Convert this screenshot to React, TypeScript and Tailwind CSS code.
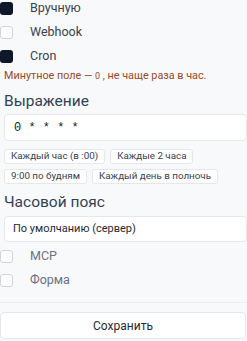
import React from "react";

const sources = [
  { label: "Вручную", checked: true, muted: false },
  { label: "Webhook", checked: false, muted: false },
  { label: "Cron", checked: true, muted: false },
];

const presets = [
  ["Каждый час (в :00)", "Каждые 2 часа"],
  ["9:00 по будням", "Каждый день в полночь"],
];

function CheckRow({ label, checked, muted }: { label: string; checked: boolean; muted: boolean }) {
  return (
    <div className="h-6 flex items-center gap-[17px]">
      <span
        className={
          checked
            ? "w-[13px] h-[13px] rounded-[3px] bg-[#0f172a] shrink-0"
            : "w-[13px] h-[13px] rounded-[3px] bg-white border border-[#d1d5db] shrink-0"
        }
      />
      <span className={muted ? "text-[12.5px] text-[#6b7280]" : "text-[12.5px] text-[#374151]"}>{label}</span>
    </div>
  );
}

export default function App() {
  return (
    <div className="w-[247px] h-[341px] overflow-hidden bg-[#f8f9fb] font-['Roboto',sans-serif]">
      <div className="-mt-[4px]">
        {sources.map((s) => (
          <CheckRow key={s.label} {...s} />
        ))}
      </div>

      <p className="pl-1 text-[10.8px] leading-4 text-[#9a4a24] whitespace-nowrap">
        Минутное поле — <span className="text-[9px]">0</span> , не чаще раза в час.
      </p>

      <h3 className="mt-[7px] pl-1 text-[15.5px] leading-5 text-[#334155]">Выражение</h3>
      <div className="mt-[3px] ml-1 h-[27px] bg-white border border-[#e5e7eb] rounded-[4px] flex items-center pl-[9px] font-['Liberation_Mono',monospace] text-[12px] text-[#111827]">
        0 * * * *
      </div>

      <div className="mt-[8px] ml-1 flex flex-col gap-[5px]">
        {presets.map((row, i) => (
          <div key={i} className="flex gap-[5px]">
            {row.map((p) => (
              <span
                key={p}
                className="h-[15px] px-[6px] flex items-center bg-white border border-[#e5e7eb] rounded-[3px] text-[9.8px] text-[#374151] whitespace-nowrap"
              >
                {p}
              </span>
            ))}
          </div>
        ))}
      </div>

      <h3 className="mt-[8px] pl-1 text-[15.5px] leading-5 text-[#334155]">Часовой пояс</h3>
      <div className="mt-[4px] ml-1 h-[26px] bg-white border border-[#e5e7eb] rounded-[4px] flex items-center pl-[8px] text-[11px] text-[#1f2937]">
        По умолчанию (сервер)
      </div>

      <div className="mt-[2px]">
        <CheckRow label="MCP" checked={false} muted />
        <CheckRow label="Форма" checked={false} muted />
      </div>

      <div className="mt-[10px] border-t border-[#eceef2]" />
      <button className="mt-[9px] w-[246px] h-[27px] bg-white border border-[#e5e7eb] rounded-[4px] text-[12px] text-[#1f2937]">
        Сохранить
      </button>
    </div>
  );
}
